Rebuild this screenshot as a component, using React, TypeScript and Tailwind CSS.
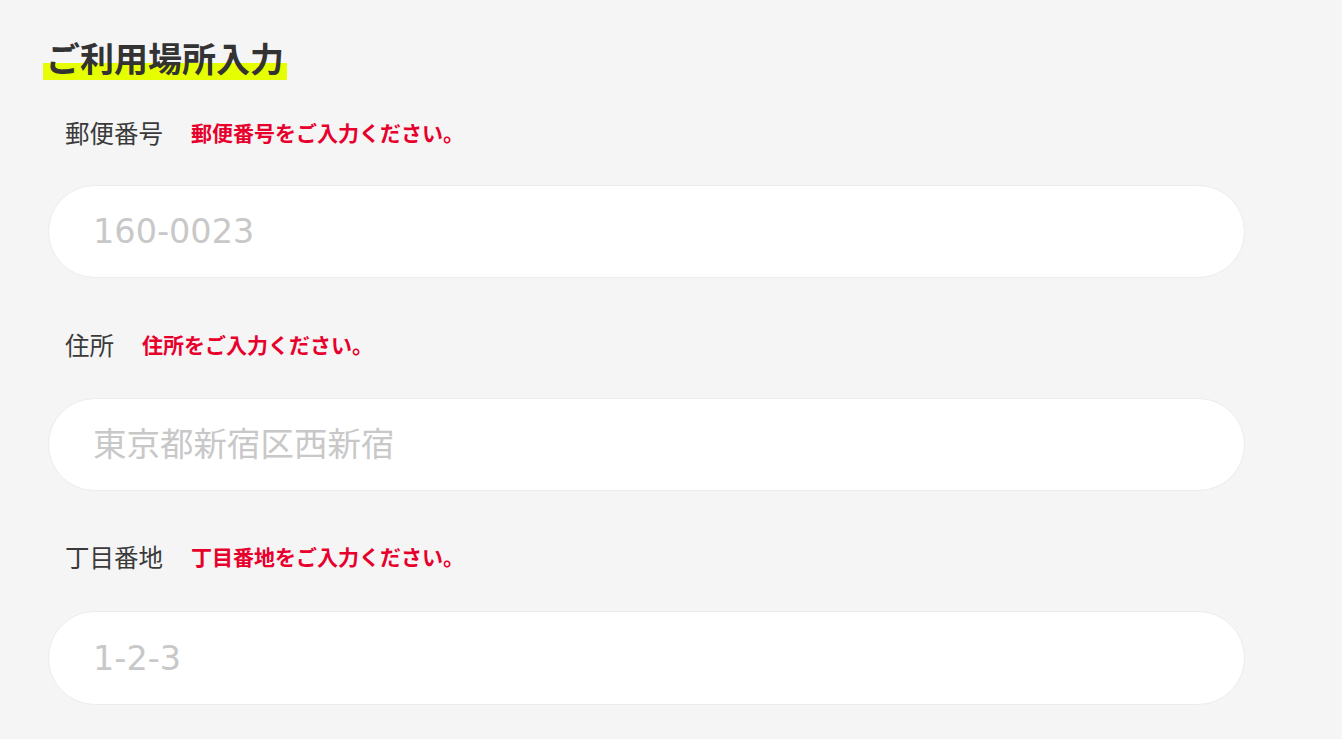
import React from "react";

const font = { fontFamily: '"Noto Sans CJK JP", "Noto Sans", sans-serif' };
const inputFont = { fontFamily: '"DejaVu Sans", "Noto Sans CJK JP", sans-serif' };

const inputCls =
  "block w-[1197px] rounded-full border border-[#ececec] bg-white pl-[44px] text-[33.5px] text-[#333] outline-none placeholder:text-[#c8c8c8]";

export default function App() {
  return (
    <div className="min-h-[739px] w-full bg-[#f5f5f5] pl-[48px] pt-[38px]" style={font}>
      <h2 className="ml-[-5px]">
        <span className="inline-block bg-[linear-gradient(transparent_25px,#e6ff00_25px)] px-[3px] pb-[2px] text-[34px] font-bold leading-[40px] text-[#333]">
          ご利用場所入力
        </span>
      </h2>
      <div className="flex flex-col">
        <div className="mt-[35px]">
          <div className="flex h-[36px] items-center pl-[17px]">
            <span className="text-[24.5px] text-[#3a3a3a]">郵便番号</span>
            <span className="ml-[28px] text-[21px] font-bold text-[#e8002d]">郵便番号をご入力ください。</span>
          </div>
          <input className={`${inputCls} mt-[34px] h-[93px]`} placeholder="160-0023" style={inputFont} />
        </div>
        <div className="mt-[49px]">
          <div className="flex h-[36px] items-center pl-[17px]">
            <span className="text-[24.5px] text-[#3a3a3a]">住所</span>
            <span className="ml-[28px] text-[21px] font-bold text-[#e8002d]">住所をご入力ください。</span>
          </div>
          <input className={`${inputCls} mt-[35px] h-[93px]`} placeholder="東京都新宿区西新宿" style={inputFont} />
        </div>
        <div className="mt-[48px]">
          <div className="flex h-[36px] items-center pl-[17px]">
            <span className="text-[24.5px] text-[#3a3a3a]">丁目番地</span>
            <span className="ml-[28px] text-[21px] font-bold text-[#e8002d]">丁目番地をご入力ください。</span>
          </div>
          <input className={`${inputCls} mt-[36px] h-[94px]`} placeholder="1-2-3" style={inputFont} />
        </div>
      </div>
    </div>
  );
}
